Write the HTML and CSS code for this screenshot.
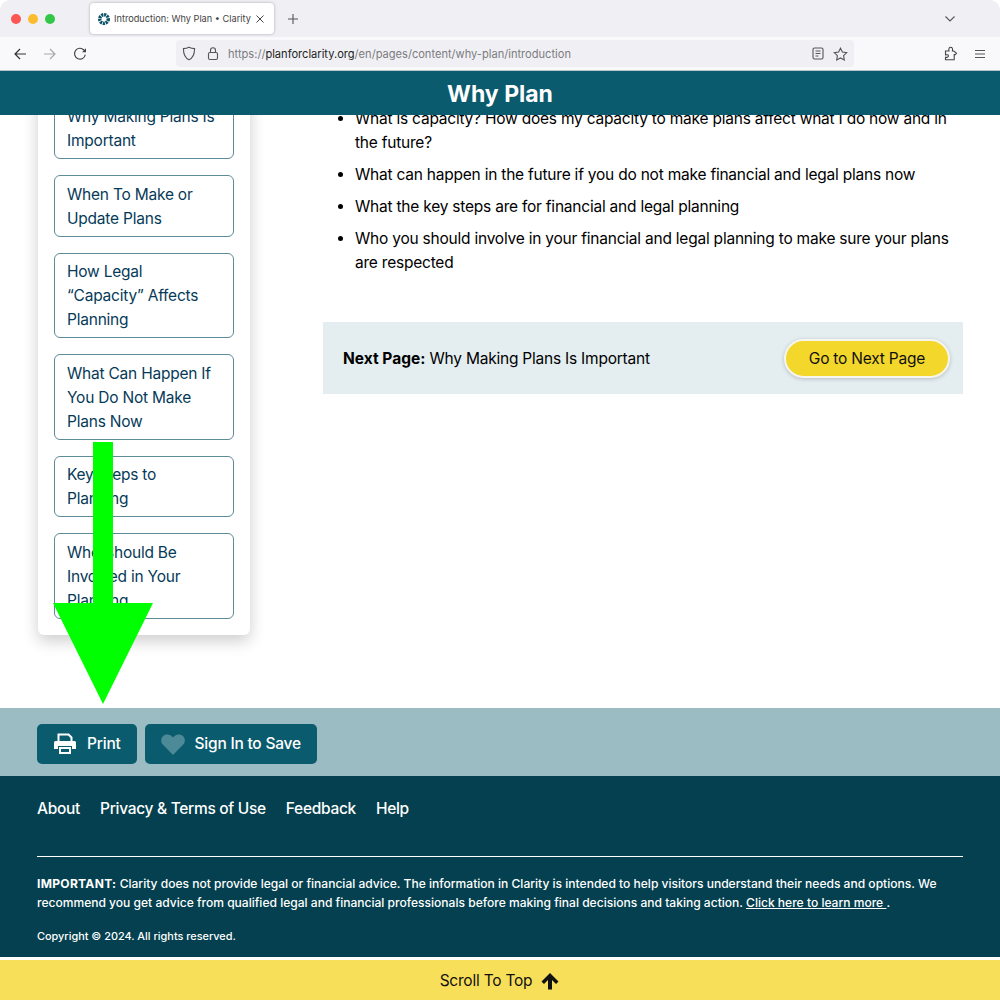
FILE: index.html
```html
<!DOCTYPE html>
<html>
<head>
  <title>Introduction: Why Plan • Clarity</title>
  <link rel="stylesheet" href="styles.css">
</head>
<body>
  <div class="browser-tabs">
    <div class="traffic-lights">
      <span class="light light-red"></span>
      <span class="light light-yellow"></span>
      <span class="light light-green"></span>
    </div>
    <div class="tab">
      <svg class="favicon" width="12" height="12" viewBox="0 0 14 14">
        <circle cx="7" cy="7" r="5" fill="none" stroke="#0b4f66" stroke-width="4" stroke-dasharray="2.4 0.9"/>
        <circle cx="7" cy="7" r="1.6" fill="#fff"/>
      </svg>
      <span class="tab-title">Introduction: Why Plan • Clarity</span>
      <svg class="tab-close" width="10" height="10" viewBox="0 0 10 10">
        <path d="M1.5 1.5l7 7M8.5 1.5l-7 7" stroke="#444" stroke-width="1" fill="none"/>
      </svg>
    </div>
    <svg class="tab-new" width="12" height="12" viewBox="0 0 12 12">
      <path d="M6 1v10M1 6h10" stroke="#555" stroke-width="1.1" fill="none"/>
    </svg>
    <svg class="tab-list" width="12" height="8" viewBox="0 0 12 8">
      <path d="M1.5 1.5L6 6l4.5-4.5" stroke="#555" stroke-width="1.1" fill="none"/>
    </svg>
  </div>

  <div class="browser-toolbar">
    <svg class="nav-icon nav-back" width="14" height="14" viewBox="0 0 14 14">
      <path d="M13 7H2M7 2L2 7l5 5" stroke="#333" stroke-width="1.2" fill="none"/>
    </svg>
    <svg class="nav-icon nav-forward" width="14" height="14" viewBox="0 0 14 14">
      <path d="M1 7h11M7 2l5 5-5 5" stroke="#aaa" stroke-width="1.2" fill="none"/>
    </svg>
    <svg class="nav-icon nav-reload" width="14" height="14" viewBox="0 0 14 14">
      <path d="M12.3 7.6A5.4 5.4 0 1 1 10.9 3L12.6 4.6" stroke="#444" stroke-width="1.1" fill="none"/>
      <path d="M13 1.2v4h-4z" fill="#444"/>
    </svg>
    <div class="url-bar">
      <svg class="url-icon" width="14" height="15" viewBox="0 0 14 15">
        <path d="M7 1.2c2 1 3.600 1.300 5.600 1.400 0 5-1.200 9.300-5.600 11.200C2.600 11.900 1.400 7.600 1.400 2.600 3.400 2.500 5 2.200 7 1.200z" stroke="#555" stroke-width="1.100" fill="none"/>
      </svg>
      <svg class="url-icon url-lock" width="12" height="15" viewBox="0 0 12 15">
        <rect x="1.500" y="6.500" width="9" height="7" rx="1.500" stroke="#555" stroke-width="1.100" fill="none"/>
        <path d="M3.500 6.500V4.200a2.500 2.500 0 0 1 5 0v2.300" stroke="#555" stroke-width="1.100" fill="none"/>
      </svg>
      <span class="url-text">https://<b>planforclarity.org</b>/en/pages/content/why-plan/introduction</span>
      <svg class="url-icon url-reader" width="12" height="13" viewBox="0 0 12 13">
        <rect x="1" y="1" width="10" height="11" rx="1.500" stroke="#555" stroke-width="1.100" fill="none"/>
        <path d="M3.500 4h5M3.500 6.500h5M3.500 9h3" stroke="#555" stroke-width="1" fill="none"/>
      </svg>
      <svg class="url-icon" width="15" height="14" viewBox="0 0 15 14">
        <path d="M7.500 1.200l1.900 3.900 4.300.6-3.100 3 .7 4.200-3.800-2-3.800 2 .7-4.200-3.100-3 4.300-.6z" stroke="#555" stroke-width="1.100" fill="none"/>
      </svg>
    </div>
    <svg class="nav-icon nav-ext" width="14" height="15" viewBox="0 0 14 15">
      <path d="M1.500 5H5c-.6-2.800.5-3.800 1.700-3.800S9 2.300 8.400 5h1.400l2.700 2.200-1.300 1.400h-1v5.100H1.500v-2.500c2.200.5 2.900-.5 2.900-1.400S3.700 8.400 1.500 8.900z" stroke="#444" stroke-width="1.100" fill="none"/>
    </svg>
    <svg class="nav-icon nav-menu" width="12" height="10" viewBox="0 0 12 10">
      <path d="M1 1.500h10M1 5h10M1 8.500h10" stroke="#555" stroke-width="1.100" fill="none"/>
    </svg>
  </div>

  <header class="page-title">Why Plan</header>

  <div class="page-content">
    <aside class="side-card">
      <a class="side-link">Why Making Plans Is Important</a>
      <a class="side-link">When To Make or Update Plans</a>
      <a class="side-link side-link-tall">How Legal “Capacity” Affects Planning</a>
      <a class="side-link side-link-tall">What Can Happen If You Do Not Make Plans Now</a>
      <a class="side-link">Key Steps to Planning</a>
      <a class="side-link side-link-tall">Who Should Be Involved in Your Planning</a>
    </aside>

    <main class="main-col">
      <ul class="topic-list">
        <li>What is capacity? How does my capacity to make plans affect what I do now and in the future?</li>
        <li>What can happen in the future if you do not make financial and legal plans now</li>
        <li>What the key steps are for financial and legal planning</li>
        <li>Who you should involve in your financial and legal planning to make sure your plans are respected</li>
      </ul>
      <div class="next-box">
        <span class="next-label"><b>Next Page:</b> Why Making Plans Is Important</span>
        <a class="next-button">Go to Next Page</a>
      </div>
    </main>
  </div>

  <div class="action-bar">
    <a class="action-button">
      <svg width="24" height="22" viewBox="0 0 24 22">
        <path d="M5.500 8V1.500h10l3 3V8" stroke="#fff" stroke-width="2" fill="none"/>
        <path d="M2.500 8h19A1.500 1.500 0 0 1 23 9.500V16h-4v-3H5v3H1V9.500A1.500 1.500 0 0 1 2.500 8z" fill="#fff"/>
        <path d="M6 14h12v7H6z" fill="#fff"/>
        <path d="M8 16h8v3H8z" fill="#0b5b6e"/>
      </svg>
      Print
    </a>
    <a class="action-button">
      <svg width="24" height="21" viewBox="0 0 24 21">
        <path d="M12 21L1.800 10.600C-.6 8 -.2 3.900 2.400 1.800 5 -.3 8.800 0 11 2.400l1 1.100 1-1.100c2.200-2.400 6-2.700 8.600-.6 2.600 2.100 3 6.200.6 8.800z" fill="#4d8a98"/>
      </svg>
      Sign In to Save
    </a>
  </div>

  <footer class="site-footer">
    <nav class="footer-links">
      <a>About</a>
      <a>Privacy &amp; Terms of Use</a>
      <a>Feedback</a>
      <a>Help</a>
    </nav>
    <div class="footer-note">
      <p><b>IMPORTANT:</b> Clarity does not provide legal or financial advice. The information in Clarity is intended to help visitors understand their needs and options. We recommend you get advice from qualified legal and financial professionals before making final decisions and taking action. <u>Click here to learn more </u>.</p>
      <p class="copyright">Copyright © 2024. All rights reserved.</p>
    </div>
  </footer>

  <div class="scroll-top">
    Scroll To Top
    <svg width="20" height="18" viewBox="0 0 20 18">
      <path d="M10 1L1.500 9.500 4 12l4-4v9.500h4V8l4 4 2.500-2.500z" fill="#111"/>
    </svg>
  </div>

  <!-- green annotation arrow over the page -->
  <svg class="arrow-overlay" width="100" height="262" viewBox="0 0 100 262">
    <path d="M40 0h20v161h40L50 262 0 161h40z" fill="#00ff00"/>
  </svg>
</body>
</html>
```

FILE: styles.css
```css
* {
  box-sizing: border-box;
}

html, body {
  height: 1000px;
  overflow: hidden;
}

body {
  position: relative;
  margin: 0;
  display: flex;
  flex-direction: column;
  font-family: 'Inter', sans-serif;
  font-size: 15.5px;
  letter-spacing: -0.22px;
  line-height: 24px;
  color: #000;
  background-color: #fff;
}

/* Browser chrome */
.browser-tabs {
  height: 37px;
  flex-shrink: 0;
  display: flex;
  align-items: center;
  letter-spacing: 0;
  background-color: #f0eff4;
  border-radius: 10px 10px 0 0;
}

.traffic-lights {
  display: flex;
  gap: 7px;
  margin-left: 11px;
  width: 79px;
  flex-shrink: 0;
}

.light {
  width: 10px;
  height: 10px;
  border-radius: 50%;
}

.light-red { background-color: #fc5753; }
.light-yellow { background-color: #fdbc2e; }
.light-green { background-color: #33c748; }

.tab {
  width: 184px;
  height: 31px;
  display: flex;
  align-items: center;
  padding-left: 8px;
  background-color: #fff;
  border-radius: 4px;
  box-shadow: 0 0 3px rgba(0,0,0,0.3);
}

.tab-title {
  margin-left: 4px;
  font-size: 9.200px;
  color: #444;
  white-space: nowrap;
}

.tab-close {
  margin-left: 4px;
  flex-shrink: 0;
}

.tab-new {
  margin-left: 13px;
}

.tab-list {
  margin-left: auto;
  margin-right: 44px;
}

.browser-toolbar {
  height: 34px;
  flex-shrink: 0;
  display: flex;
  align-items: center;
  letter-spacing: 0;
  background-color: #f9f9fb;
  border-bottom: 1px solid #b9c4c8;
}

.nav-back { margin-left: 13px; }
.nav-forward { margin-left: 16px; }
.nav-reload { margin-left: 16px; }

.url-bar {
  width: 678px;
  height: 27px;
  margin-left: 89px;
  display: flex;
  align-items: center;
  gap: 9px;
  padding: 0 6px;
  background-color: #f0f0f4;
  border-radius: 4px;
}

.url-lock {
  margin-left: 2px;
}

.url-text {
  flex: 1;
  font-size: 11.100px;
  color: #7b7b80;
  white-space: nowrap;
}

.url-text b {
  font-weight: 400;
  color: #222;
}

.nav-ext { margin-left: 90px; }
.nav-menu { margin-left: 16px; }

/* Page */
.page-title {
  height: 44px;
  flex-shrink: 0;
  text-align: center;
  font-size: 23px;
  line-height: 46px;
  font-weight: 700;
  letter-spacing: 0;
  color: #fff;
  background-color: #0b5b6e;
}

.page-content {
  flex: 1;
  min-height: 0;
  overflow: hidden;
  display: flex;
  align-items: flex-start;
  padding-left: 38px;
}

.side-card {
  width: 212px;
  flex-shrink: 0;
  margin-top: -33.600px;
  padding: 16px;
  display: flex;
  flex-direction: column;
  gap: 16px;
  background-color: #fff;
  border-radius: 6px;
  box-shadow: 0 6px 16px rgba(0,0,0,0.2);
}

.side-link {
  display: block;
  height: 61.600px;
  padding: 6.600px 12px 5px;
  overflow: hidden;
  color: #063a58;
  border: 1px solid #5d8b99;
  border-radius: 6px;
}

.side-link-tall {
  height: 85.600px;
}

.main-col {
  width: 640px;
  margin-left: 73px;
  flex-shrink: 0;
}

.topic-list {
  margin: -8px 0 0;
  padding-left: 32px;
}

.topic-list li {
  margin-bottom: 8px;
}

.next-box {
  height: 72px;
  margin-top: 47px;
  display: flex;
  align-items: center;
  justify-content: space-between;
  padding: 0 13px 0 20px;
  background-color: #e4edf0;
}

.next-label {
  padding-top: 2px;
}

.next-box b {
  letter-spacing: 0;
}

.next-button {
  height: 39px;
  padding: 0 23px;
  line-height: 35px;
  color: #111;
  background-color: #f4d72b;
  border: 2px solid #f6f6ee;
  border-radius: 20px;
  box-shadow: 0 1px 4px rgba(0,0,0,0.2);
}

.action-bar {
  height: 68px;
  flex-shrink: 0;
  display: flex;
  gap: 8px;
  align-items: flex-start;
  padding: 16px 0 0 37px;
  background-color: #9bbcc3;
}

.action-button {
  height: 40px;
  display: flex;
  align-items: center;
  gap: 10px;
  padding: 0 16px;
  font-weight: 500;
  color: #fff;
  background-color: #0b5b6e;
  border-radius: 5px;
}

.site-footer {
  height: 181px;
  flex-shrink: 0;
  padding: 21px 37px 0;
  color: #fff;
  background-color: #04404f;
}

.footer-links {
  display: flex;
  gap: 20px;
  height: 59px;
  font-weight: 500;
  letter-spacing: -0.3px;
}

.footer-note {
  border-top: 1px solid #fff;
  padding-top: 17px;
  font-size: 12.060px;
  letter-spacing: 0;
  line-height: 19px;
  font-weight: 500;
}

.footer-note b {
  letter-spacing: 0.3px;
}

.footer-note p {
  margin: 0;
}

.footer-note .copyright {
  margin-top: 15px;
  font-size: 10.900px;
}

.scroll-top {
  height: 43px;
  flex-shrink: 0;
  display: flex;
  align-items: center;
  justify-content: center;
  gap: 8px;
  padding-top: 1px;
  border-top: 3px solid #fff;
  color: #111;
  background-color: #f8df5a;
}

.arrow-overlay {
  position: absolute;
  left: 53px;
  top: 442px;
}
```
